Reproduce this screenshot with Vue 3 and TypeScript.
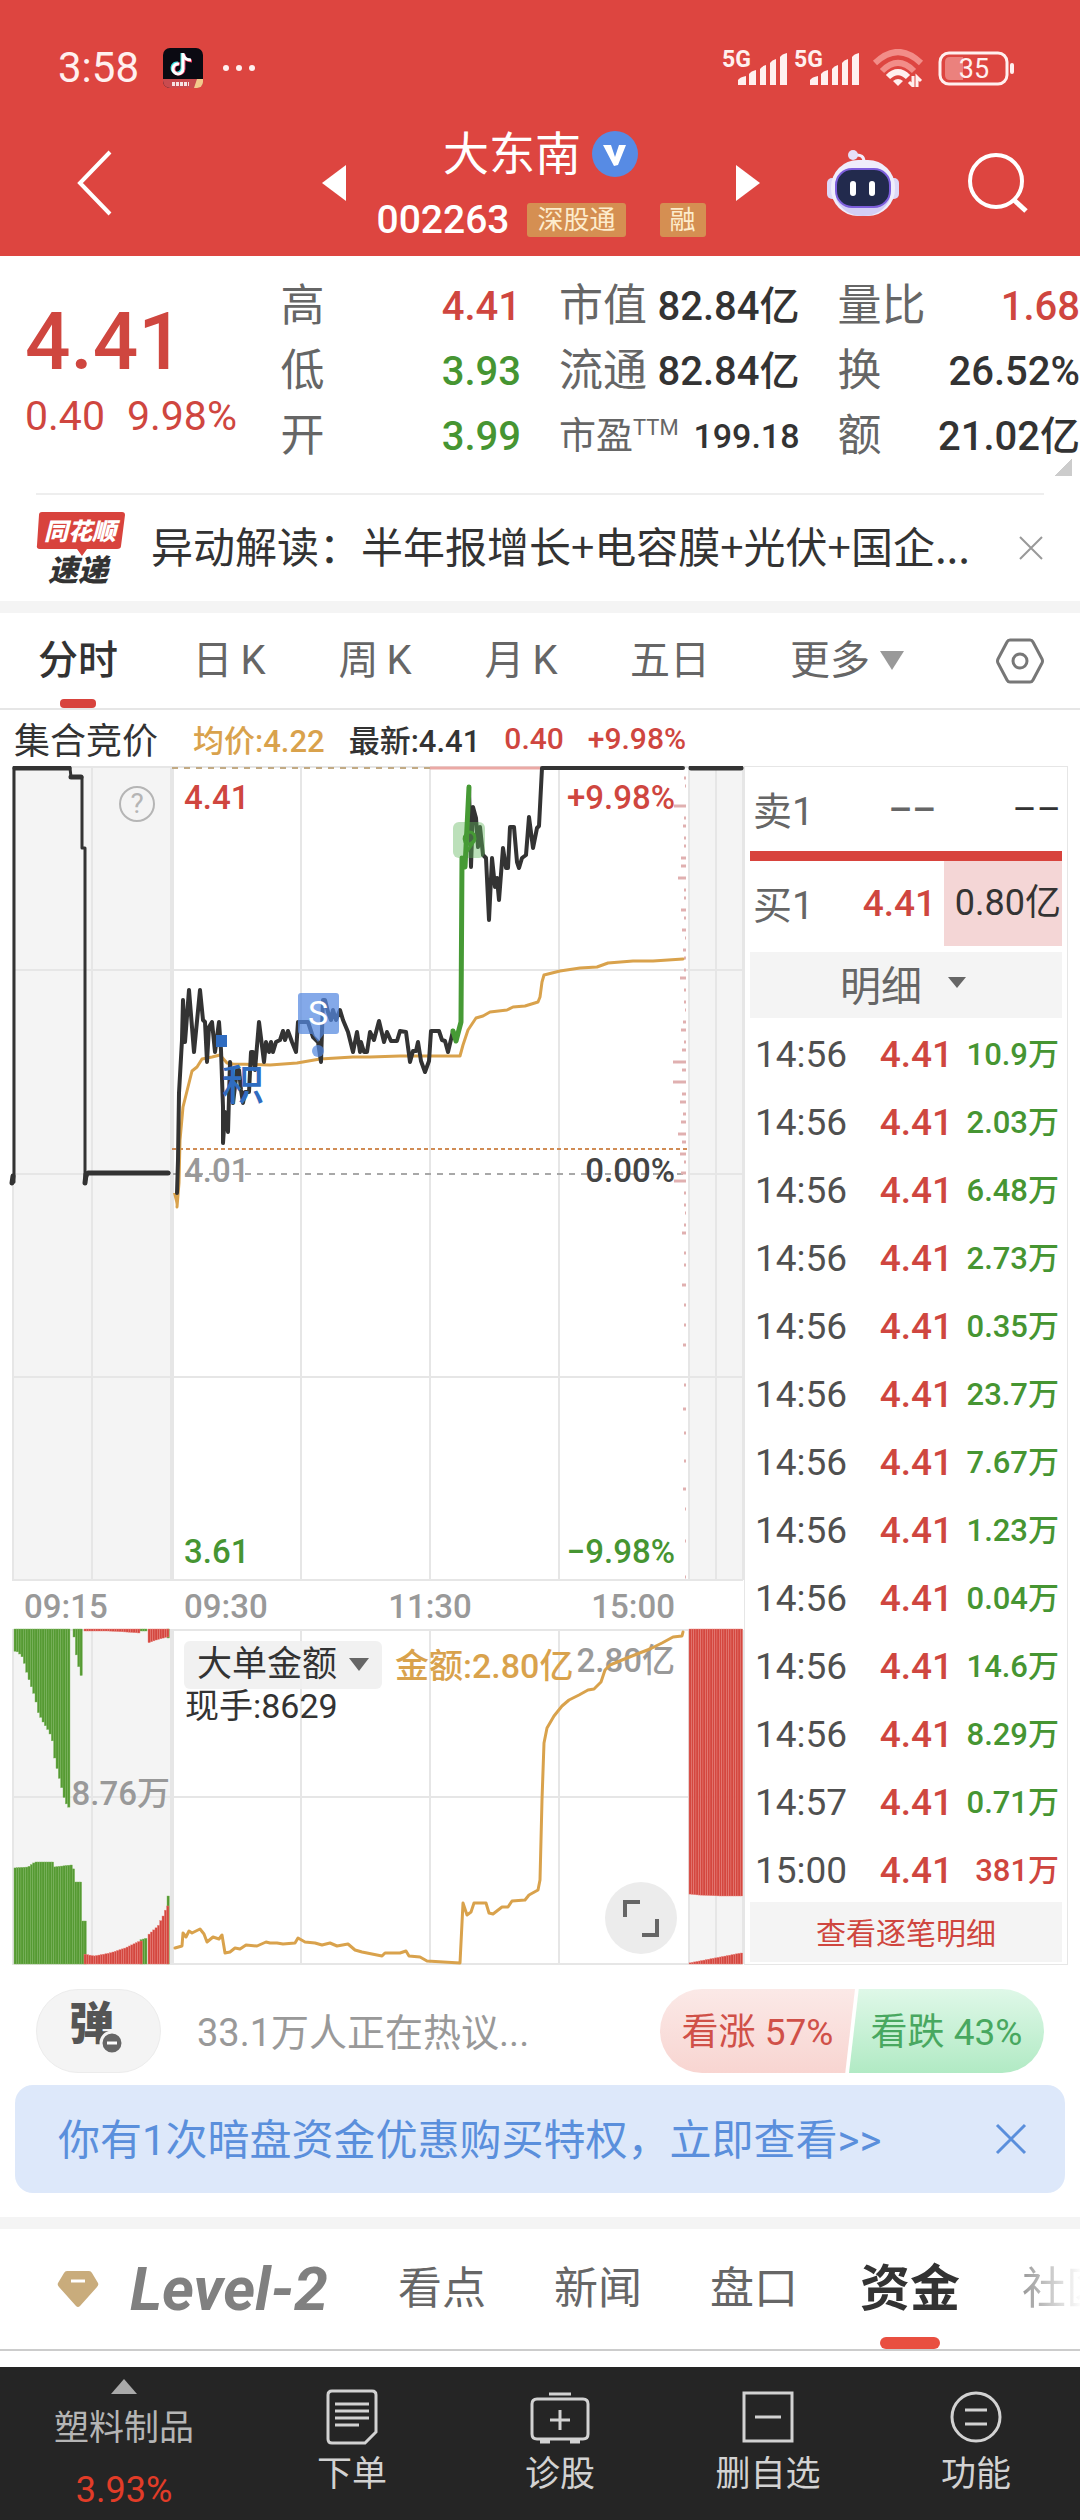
<script setup lang="ts">
import { ref } from 'vue'

type Point = [number, number]
interface Bar { x: number; y: number; h: number }
interface Stat { label: string; sup?: string; value: string; tone: string }

const stats: Stat[][] = [
  [
    { label: '高', value: '4.41', tone: 'up' },
    { label: '低', value: '3.93', tone: 'down' },
    { label: '开', value: '3.99', tone: 'down' },
  ],
  [
    { label: '市值', value: '82.84亿', tone: 'flat' },
    { label: '流通', value: '82.84亿', tone: 'flat' },
    { label: '市盈', sup: 'TTM', value: '199.18', tone: 'flat' },
  ],
  [
    { label: '量比', value: '1.68', tone: 'up' },
    { label: '换', value: '26.52%', tone: 'flat' },
    { label: '额', value: '21.02亿', tone: 'flat' },
  ],
]

const periods = ['日', '周', '月']

const trades = [
  ['14:56', '10.9万'], ['14:56', '2.03万'], ['14:56', '6.48万'], ['14:56', '2.73万'],
  ['14:56', '0.35万'], ['14:56', '23.7万'], ['14:56', '7.67万'], ['14:56', '1.23万'],
  ['14:56', '0.04万'], ['14:56', '14.6万'], ['14:56', '8.29万'], ['14:57', '0.71万'],
  ['15:00', '381万'],
]

const indicator = ref('大单金额')

const priceMorning =
  '177,1193 178,1160 179,1093 182,1040 183,1000 185,1042 189,990 194,1052 200,990 203,1020 205,1022 207,1062 209,1027 212,1022 215,1052 219,1022 221,1050 223,1107 223,1143 225,1112 228,1132 230,1062 233,1103 237,1070 239,1070 241,1090 243,1103 245,1092 249,1092 251,1052 253,1052 255,1070 259,1022 264,1062 266,1042 269,1052 271,1042 273,1052 276,1042 280,1040 283,1031 285,1040 288,1031 292,1042 296,1052 298,1022 308,1022 313,1037 318,1042 321,1062 323,1000 325,1000 328,1012 331,1020 333,1010 336,1020 340,1010 343,1020 348,1032 353,1052 357,1032 360,1052 361,1042 364,1052 367,1052 370,1032 374,1040 379,1021 384,1042 387,1032 391,1041 397,1041 400,1031 406,1032 410,1062 413,1051 416,1051 418,1042 421,1061 425,1072 429,1061 431,1031 439,1031 442,1040 445,1041 448,1052 453,1031'
const priceJump = '453,1031 456,1041 461,1022 462,858 465,867 469,787'
const priceAfternoon =
  '469,787 471,867 473,807 476,818 478,847 480,827 483,855 486,858 489,920 492,858 495,887 497,878 499,900 503,848 506,868 508,868 510,827 514,827 517,862 519,868 522,858 526,855 529,817 533,848 537,828 539,826 542,768 683,768'
const average =
  '177,1207 179,1183 180,1140 183,1107 192,1071 197,1067 202,1059 212,1057 220,1055 227,1063 233,1064 270,1065 297,1063 320,1059 353,1057 370,1057 400,1056 460,1056 463,1045 468,1030 476,1018 483,1016 490,1012 507,1010 513,1007 525,1006 538,1002 540,997 542,982 544,975 560,971 580,968 597,967 608,963 633,961 653,961 683,959'
const amount =
  '175,1948 182,1946 183,1933 186,1937 189,1931 192,1933 200,1929 204,1934 207,1942 213,1937 219,1939 222,1935 225,1953 230,1952 235,1948 240,1949 246,1945 257,1946 266,1942 270,1943 277,1943 283,1944 295,1943 298,1938 305,1942 315,1943 322,1945 330,1943 337,1946 348,1944 355,1950 362,1952 367,1953 382,1956 385,1953 400,1953 406,1951 409,1956 420,1957 427,1961 460,1963 463,1903 467,1915 471,1912 474,1903 486,1903 489,1913 493,1914 502,1907 508,1907 512,1901 525,1900 529,1895 538,1890 540,1880 542,1800 544,1743 547,1728 554,1716 562,1706 569,1700 579,1695 588,1690 594,1689 601,1682 605,1670 610,1665 622,1660 637,1654 650,1649 662,1643 673,1637 682,1636 683,1632'

// Order-flow marks along the right edge: [y, length]
const flowMarks: Point[] = [
  [778, 2], [786, 1], [806, 12], [818, 2], [826, 3], [838, 2], [846, 2], [858, 5], [866, 5], [878, 8],
  [890, 2], [898, 2], [910, 5], [918, 2], [930, 4], [938, 1], [950, 3], [958, 2], [970, 2], [978, 6],
  [990, 2], [1002, 2], [1010, 1], [1022, 3], [1030, 5], [1042, 2], [1050, 4], [1062, 13], [1070, 4],
  [1082, 13], [1094, 4], [1102, 6], [1114, 3], [1122, 5], [1134, 8], [1142, 4], [1154, 6], [1162, 2],
  [1173, 5], [1181, 12], [1193, 2], [1205, 2], [1213, 1], [1225, 2], [1233, 4], [1253, 2], [1265, 2],
  [1285, 4], [1305, 2], [1325, 2], [1345, 3], [1385, 2], [1409, 3], [1433, 2], [1461, 2], [1489, 3],
  [1509, 1], [1541, 1], [1577, 1],
]

function level(edge: Point[], x: number): number {
  for (let i = 1; i < edge.length; i++) {
    const [x0, y0] = edge[i - 1]
    const [x1, y1] = edge[i]
    if (x <= x1) return x1 === x0 ? y1 : y0 + ((y1 - y0) * (x - x0)) / (x1 - x0)
  }
  return edge[edge.length - 1][1]
}

// Columns between a straight base line and a sloping edge
function columns(edge: Point[], base: number): Bar[] {
  const bars: Bar[] = []
  const end = edge[edge.length - 1][0]
  for (let x = edge[0][0]; x < end; x += 7 / 3) {
    const y = level(edge, x + 1)
    bars.push({ x, y: Math.min(y, base), h: Math.abs(y - base) })
  }
  return bars
}

const TOP = 1629
const BASE = 1964
const greenBars = [
  ...columns([[14, 1651], [18, 1652], [23, 1658], [26, 1670], [30, 1683], [35, 1697], [38, 1712], [43, 1722], [48, 1730], [52, 1738], [54, 1755], [58, 1773], [63, 1793], [65, 1802], [70, 1809]], TOP),
  ...columns([[73, 1635], [74, 1637], [77, 1660], [80, 1672], [82, 1679]], TOP),
  ...columns([[14, 1868], [28, 1867], [35, 1862], [53, 1862], [54, 1867], [71, 1865], [74, 1870], [75, 1882], [81, 1882], [82, 1921], [84, 1921]], BASE),
  ...columns([[140, 1940], [147, 1938]], BASE),
  ...columns([[167, 1896], [169, 1896]], BASE),
  ...columns([[140, 1631], [147, 1631]], TOP),
  ...columns([[167, 1638], [169, 1638]], TOP),
]
const redBars = [
  ...columns([[84, 1954], [94, 1956], [110, 1953], [125, 1948], [140, 1941]], BASE),
  ...columns([[148, 1935], [158, 1926], [163, 1916], [167, 1906]], BASE),
  ...columns([[84, 1631], [108, 1631], [126, 1632], [139, 1633]], TOP),
  ...columns([[148, 1643], [156, 1640], [167, 1637]], TOP),
  ...columns([[689, 1894], [698, 1895], [720, 1896], [741, 1896]], TOP),
  ...columns([[689, 1963], [715, 1958], [741, 1953]], BASE),
]
</script>

<template>
  <div class="page">
    <header class="top">
      <div class="status">
        <span class="clock">3:58</span>
        <svg class="app-icon" width="40" height="40" viewBox="0 0 40 40">
          <rect width="40" height="40" rx="7" fill="#0b0a12" />
          <g fill="none" stroke-width="3">
            <path d="M19 5v15a5 5 0 1 1-4-5M19 6c1 4 4 6 8 6" stroke="#38e2e6" />
            <path d="M21 6v15a5 5 0 1 1-4-5M21 7c1 4 4 6 8 6" stroke="#ef3a5e" />
            <path d="M20 5v16a5 5 0 1 1-4-5M20 6c1 4 4 6 8 6" stroke="#fff" />
          </g>
          <path d="M0 31h40v2a7 7 0 0 1-7 7H7a7 7 0 0 1-7-7z" fill="#c94b4f" />
          <path d="M31 40l3-9h6v3a6 6 0 0 1-6 6z" fill="#f3c98b" />
          <path d="M9 36h17" stroke="#fff" stroke-width="4" stroke-dasharray="3 1" opacity=".85" />
        </svg>
        <span class="dots"><i></i><i></i><i></i></span>
        <span class="grow"></span>
        <svg v-for="n in 2" :key="n" class="signal" width="66" height="52" viewBox="0 -8 66 52">
          <text x="0" y="17" font-size="23" font-weight="700" fill="#fff0ef">5G</text>
          <path d="M16 35v-5q2-3 8-4v9zM27 35V24q2-3 7-4v15zM38 35V19q2-3 6-4v20zM48 35V13q2-3 6-4v26zM58 35V7q2-3 7-4v32z" fill="#fff0ef" />
        </svg>
        <svg class="wifi" width="52" height="38" viewBox="0 0 52 38" fill="none" stroke-width="6">
          <path d="M3 14Q26-8 49 14" stroke="#f28d88" />
          <path d="M10 22Q26 6 42 22" stroke="#f28d88" />
          <path d="M16 28Q26 18 36 28" stroke="#fff0ef" />
          <path d="M26 37l-5-5q5-4 10 0z" fill="#fff0ef" />
          <path d="M41 27v10l-4-4M45 38V28l4 4" stroke="#fff0ef" stroke-width="3" />
        </svg>
        <svg class="battery" width="78" height="36" viewBox="0 0 78 36">
          <rect x="2" y="3" width="67" height="31" rx="9" fill="none" stroke="#fff0ef" stroke-width="3" />
          <path d="M12 7h13v23H12q-5 0-5-5V12q0-5 5-5z" fill="#eb817d" />
          <rect x="72" y="13" width="4" height="11" rx="2" fill="#fff0ef" />
          <text x="36" y="28" text-anchor="middle" font-size="27" fill="#fff0ef">35</text>
        </svg>
      </div>
      <nav class="nav">
        <button class="back" aria-label="返回">
          <svg width="46" height="70" viewBox="0 0 46 70"><path d="M38 4L8 35l30 31" fill="none" stroke="#fff" stroke-width="4" /></svg>
        </button>
        <button aria-label="上一只"><svg width="24" height="36" viewBox="0 0 24 36"><path d="M24 0v36L0 18z" fill="#fff" /></svg></button>
        <div class="title">
          <h1>大东南
            <svg width="48" height="48" viewBox="0 0 48 48"><circle cx="24" cy="24" r="23" fill="#578be4" /><path d="M12 15l11 21 4-1 8-20h-7l-4 12-4-12z" fill="#fff" /></svg>
          </h1>
          <p><b>002263</b><span class="tag">深股通</span><span class="tag second">融</span></p>
        </div>
        <button aria-label="下一只"><svg width="24" height="36" viewBox="0 0 24 36"><path d="M0 0v36l24-18z" fill="#fff" /></svg></button>
        <button aria-label="智能助手">
          <svg width="74" height="68" viewBox="0 0 74 68">
            <path d="M38 13q0-8-9-7" fill="none" stroke="#f3ecfb" stroke-width="3" />
            <circle cx="27" cy="6" r="5" fill="#e6dff8" />
            <rect x="1" y="29" width="12" height="21" rx="5" fill="#dcd8f8" />
            <rect x="61" y="29" width="12" height="21" rx="5" fill="#dcd8f8" />
            <rect x="5" y="11" width="64" height="56" rx="27" fill="#efedfb" />
            <path d="M10 50q27 16 54 0-8 17-27 17T10 50z" fill="#d3cdf5" />
            <rect x="10" y="20" width="54" height="38" rx="16" fill="#222a4d" stroke="#7d5edc" stroke-width="2" />
            <rect x="24" y="32" width="6" height="15" rx="3" fill="#fff" />
            <rect x="43" y="32" width="6" height="15" rx="3" fill="#fff" />
          </svg>
        </button>
        <button aria-label="搜索">
          <svg width="62" height="62" viewBox="0 0 62 62" fill="none" stroke="#fff" stroke-width="4"><circle cx="29" cy="29" r="26" /><path d="M47 48l12 11" stroke-width="5" /></svg>
        </button>
      </nav>
    </header>

    <section class="quote">
      <div class="price up">
        <strong>4.41</strong>
        <p><span>0.40</span><span>9.98%</span></p>
      </div>
      <dl v-for="(group, i) in stats" :key="i">
        <div v-for="s in group" :key="s.label" :class="{ compact: s.sup }">
          <dt>{{ s.label }}<sup v-if="s.sup">{{ s.sup }}</sup></dt>
          <dd :class="s.tone">{{ s.value }}</dd>
        </div>
      </dl>
      <i class="corner"></i>
    </section>

    <section class="news">
      <svg width="90" height="92" viewBox="0 -10 90 92">
        <path d="M6 0h80q3 0 3 3l-4 31q0 3-4 3H51l-5 7-5-7H4q-4 0-3-4L3 3q0-3 3-3z" fill="#d8433d" />
        <text x="44" y="28" text-anchor="middle" font-size="24" font-weight="900" font-style="italic" fill="#fff">同花顺</text>
        <text x="42" y="69" text-anchor="middle" font-size="30" font-weight="900" font-style="italic" fill="#333">速递</text>
      </svg>
      <a href="#">异动解读：半年报增长+电容膜+光伏+国企...</a>
      <button aria-label="关闭"><svg width="26" height="26" viewBox="0 0 26 26"><path d="M2 2l22 22M24 2L2 24" stroke="#999" stroke-width="2" /></svg></button>
    </section>

    <nav class="periods">
      <button class="active">分时</button>
      <button v-for="p in periods" :key="p">{{ p }}<span>K</span></button>
      <button>五日</button>
      <button class="more">更多<svg width="24" height="20" viewBox="0 0 24 20"><path d="M0 0h24L12 19z" fill="#999" /></svg></button>
      <button class="settings" aria-label="设置">
        <svg width="48" height="48" viewBox="0 0 48 48" fill="none" stroke="#777" stroke-width="3"><path d="M14 3h20q2 0 3 2l9 17q1 2 0 4l-9 17q-1 2-3 2H14q-2 0-3-2L2 26q-1-2 0-4l9-17q1-2 3-2z" /><circle cx="24" cy="24" r="7" /></svg>
      </button>
    </nav>

    <div class="legend">
      <span class="auction">集合竞价</span>
      <span class="avg">均价:4.22</span>
      <span class="last">最新:4.41</span>
      <span class="up chg">0.40</span>
      <span class="up">+9.98%</span>
    </div>

    <main class="market">
      <div class="charts">
        <svg class="plot" viewBox="0 766 744 1199">
          <g fill="#f4f4f4">
            <rect x="12" y="767" width="161" height="813" />
            <rect x="689" y="767" width="54" height="813" />
            <rect x="12" y="1630" width="161" height="334" />
            <rect x="689" y="1630" width="54" height="334" />
          </g>
          <path d="M12 767H743M12 970H743M12 1174H173M689 1174H743M12 1377H743M12 1580H743M12 1630H743M12 1797H743M12 1964H743M13 767V1580M92 767V1580M301 767V1580M430 767V1580M559 767V1580M689 767V1580M716 767V1580M743 767V1580M13 1630V1964M92 1630V1964M301 1630V1964M430 1630V1964M559 1630V1964M689 1630V1964M716 1630V1964M743 1630V1964" class="grid" />
          <path d="M172 767V1580M172 1630V1964" stroke="#e6e6e6" stroke-width="4" />

          <path d="M172 768H430" stroke="#c2aa84" stroke-width="2" stroke-dasharray="6 6" />
          <path d="M430 768H541" stroke="#eba9a5" stroke-width="3" />
          <path d="M172 1149H689" stroke="#d08c55" stroke-width="2" stroke-dasharray="4 3" />
          <path d="M173 1174H683" stroke="#a8a8a8" stroke-width="2" stroke-dasharray="6 6" />
          <path v-for="[y, w] in flowMarks" :key="y" :d="`M${686 - w} ${y}H686`" stroke="#e0b0b0" stroke-width="3" />

          <g class="value">
            <text x="184" y="1182" fill="#999">4.01</text>
            <text x="675" y="1182" text-anchor="end" fill="#444">0.00%</text>
            <text x="184" y="809" class="t-up">4.41</text>
            <text x="675" y="809" text-anchor="end" class="t-up">+9.98%</text>
            <text x="184" y="1563" class="t-down">3.61</text>
            <text x="675" y="1563" text-anchor="end" class="t-down">−9.98%</text>
          </g>
          <g class="time">
            <text x="24" y="1618">09:15</text>
            <text x="184" y="1618">09:30</text>
            <text x="430" y="1618" text-anchor="middle">11:30</text>
            <text x="675" y="1618" text-anchor="end">15:00</text>
            <text x="170" y="1805" text-anchor="end">8.76万</text>
            <text x="675" y="1672" text-anchor="end">2.80亿</text>
          </g>

          <g fill="none" stroke="#333" stroke-linejoin="round" stroke-linecap="round">
            <path d="M12 1182H14V768H70L71 777H82V848H85V1182L88 1173H169" stroke-width="3" />
            <path d="M15 768H69M71 777H81M88 1173H168M12 1183L13 1176M85 1183L86 1174M691 768H741" stroke-width="5" />
          </g>
          <polyline :points="average" class="gold" />
          <path d="M173 1193h6l-2 16z" fill="#d9a24c" />
          <polyline :points="priceMorning" class="ink" />
          <polyline :points="priceAfternoon" class="ink" />
          <rect x="453" y="822" width="32" height="36" rx="6" fill="#5fb65b" opacity=".42" />
          <polyline :points="priceJump" class="jump" />
          <path d="M469 832q-7 4-4 10 5 5 10-3 0-7-6-7M475 840l-9 13" fill="none" stroke="#469a35" stroke-width="3" />

          <rect x="216" y="1035" width="11" height="12" fill="#2f6cc0" />
          <text x="222" y="1100" font-size="42" font-weight="500" fill="#2f6cc0">积</text>
          <g fill="#5488e0" opacity=".72">
            <path d="M301 993h35q3 0 3 3v35q0 3-3 3H324l-6 8-6-8H301q-3 0-3-3v-35q0-3 3-3z" />
            <circle cx="318" cy="1051" r="6" />
          </g>
          <text x="318" y="1025" text-anchor="middle" font-size="34" fill="#fff">S</text>

          <g fill="#559a33" stroke="#7cb45d" stroke-width="0.4">
            <rect v-for="(b, i) in greenBars" :key="i" :x="b.x" :y="b.y" width="2.3" :height="b.h" />
          </g>
          <g fill="#d4473f" stroke="#e8827b" stroke-width="0.4">
            <rect v-for="(b, i) in redBars" :key="i" :x="b.x" :y="b.y" width="2.3" :height="b.h" />
          </g>
          <polyline :points="amount" class="gold" />

          <text x="185" y="1718" font-size="34" fill="#333">现手:8629</text>
          <text x="395" y="1678" font-size="34" fill="#d9a24c" font-weight="500">金额:2.80亿</text>
        </svg>
        <button class="help" aria-label="帮助">?</button>
        <label class="picker">
          <select v-model="indicator" aria-label="指标"><option>大单金额</option><option>成交量</option></select>
          <svg width="20" height="14" viewBox="0 0 20 14"><path d="M0 0h20L10 13z" fill="#666" /></svg>
        </label>
        <button class="expand" aria-label="全屏">
          <svg width="38" height="38" viewBox="0 0 38 38" fill="none" stroke="#666" stroke-width="4"><path d="M3 18V3h15M20 36h15V20" /></svg>
        </button>
      </div>

      <aside class="book">
        <div class="level"><span>卖1</span><b class="dash">––</b><em class="dash">––</em></div>
        <div class="split"></div>
        <div class="level bid"><span>买1</span><b class="up">4.41</b><em>0.80亿</em></div>
        <button class="detail">明细<svg width="18" height="12" viewBox="0 0 18 12"><path d="M0 0h18L9 11z" fill="#666" /></svg></button>
        <table>
          <tbody>
            <tr v-for="(t, i) in trades" :key="i">
              <td>{{ t[0] }}</td>
              <td class="up">4.41</td>
              <td :class="i === trades.length - 1 ? 'up' : 'down'">{{ t[1] }}</td>
            </tr>
          </tbody>
        </table>
        <button class="all">查看逐笔明细</button>
      </aside>
    </main>

    <section class="talk">
      <button class="danmu" aria-label="弹幕">弹
        <svg width="26" height="26" viewBox="0 0 26 26"><circle cx="13" cy="13" r="11" fill="#666" stroke="#f4f4f4" stroke-width="3" /><path d="M8 13h10" stroke="#fff" stroke-width="3" /></svg>
      </button>
      <a href="#">33.1万人正在热议...</a>
      <div class="vote">
        <button class="bull">看涨 57%</button>
        <button class="bear">看跌 43%</button>
      </div>
    </section>

    <section class="promo">
      <a href="#">你有1次暗盘资金优惠购买特权，立即查看&gt;&gt;</a>
      <button aria-label="关闭"><svg width="32" height="32" viewBox="0 0 32 32"><path d="M2 2l28 28M30 2L2 30" stroke="#5a8fdc" stroke-width="3" /></svg></button>
    </section>

    <nav class="tabs">
      <svg width="42" height="38" viewBox="0 0 42 38"><path d="M10 1h22q2 0 3 2l6 10q1 2-1 4L23 36q-2 2-4 0L2 17q-2-2-1-4L7 3q1-2 3-2z" fill="#c9ac7c" /><path d="M14 11h14" stroke="#fff" stroke-width="3" /></svg>
      <button class="level2">Level-2</button>
      <button>看点</button>
      <button>新闻</button>
      <button>盘口</button>
      <button class="active">资金</button>
      <button class="cut">社区</button>
    </nav>

    <footer class="dock">
      <button class="sector">
        <svg width="26" height="15" viewBox="0 0 26 15"><path d="M0 15h26L13 0z" fill="#aaa" /></svg>
        <span>塑料制品</span>
        <em>3.93%</em>
      </button>
      <button>
        <svg width="60" height="56" viewBox="0 0 60 56"><path d="M10 2h40q4 0 4 4v37L43 54H10q-4 0-4-4V6q0-4 4-4zM13 15h34M13 22h34M13 29h34M13 36h24" /></svg>
        <span>下单</span>
      </button>
      <button>
        <svg width="60" height="56" viewBox="0 0 60 56"><path d="M19 5h22M7 10h46q5 0 5 5v30q0 5-5 5H7q-5 0-5-5V15q0-5 5-5zM30 21v20M20 31h20M10 53h10M40 53h10" /></svg>
        <span>诊股</span>
      </button>
      <button>
        <svg width="60" height="56" viewBox="0 0 60 56"><path d="M6 4h48v48H6zM17 28h26" /></svg>
        <span>删自选</span>
      </button>
      <button>
        <svg width="60" height="56" viewBox="0 0 60 56"><path d="M19 21h22M19 35h22" /><circle cx="30" cy="28" r="24" /></svg>
        <span>功能</span>
      </button>
    </footer>
  </div>
</template>

<style>
body { margin: 0; background: #fff; }
</style>

<style scoped>
* { box-sizing: border-box; }
.page { font-family: Roboto, "Noto Sans CJK SC", sans-serif; color: #333; background: #fff; overflow: hidden; white-space: nowrap; }
button { font: inherit; color: inherit; background: none; border: 0; padding: 0; margin: 0; }
a { color: inherit; text-decoration: none; }
h1, p, dl, dd { margin: 0; }
svg { display: block; flex: none; }
em { font-style: normal; }
.grow { flex: 1; }
.up { color: #cf463f; }
.down { color: #469532; }
.flat { color: #333; }

.top { background: #dd4540; color: #fff; height: 256px; }
.status { display: flex; align-items: center; height: 100px; padding: 36px 64px 0 58px; }
.clock { font-size: 42px; line-height: 48px; color: #fff0ef; margin-right: 24px; }
.dots { display: flex; gap: 7px; margin-left: 20px; }
.dots i { width: 6px; height: 6px; border-radius: 3px; background: #fff0ef; }
.signal { margin-right: 6px; }
.wifi { margin-left: 6px; }
.battery { margin-left: 14px; }
.nav { display: grid; grid-template-columns: 310fr 48fr 366fr 48fr 182fr 88fr; align-items: center; height: 156px; padding: 10px 38px 0 0; }
.nav button { display: flex; justify-content: center; }
.nav .back { justify-content: flex-start; padding-left: 72px; }
.title h1 { display: flex; justify-content: center; align-items: center; gap: 10px; font-size: 46px; font-weight: 400; line-height: 52px; }
.title p { display: flex; justify-content: center; align-items: center; margin-top: 22px; line-height: 36px; }
.title b { font-size: 39px; font-weight: 500; }
.tag { background: #d58f52; color: #fdeccd; font-size: 26px; line-height: 34px; padding: 0 10px; border-radius: 3px; margin-left: 18px; }
.tag.second { margin-left: 34px; }

.quote { position: relative; display: grid; grid-template-columns: 217fr 240fr 240fr 242fr; gap: 38px; padding: 18px 0 24px 25px; }
.price strong { display: block; font-size: 80px; font-weight: 500; line-height: 80px; margin-top: 28px; }
.price p { display: flex; gap: 22px; font-size: 41px; line-height: 48px; margin-top: 10px; }
.quote dl > div { display: flex; justify-content: space-between; align-items: center; height: 65px; }
.quote dt { font-size: 44px; line-height: 65px; color: #666; display: flex; }
.quote dd { font-size: 40px; font-weight: 500; line-height: 65px; }
.quote .compact dt { font-size: 37px; }
.quote .compact dd { font-size: 34px; }
.quote sup { font-size: 22px; line-height: 48px; }
.corner { position: absolute; right: 8px; bottom: 17px; width: 18px; height: 18px; background: linear-gradient(135deg, transparent 50%, #ccc 50%); }

.news { display: flex; align-items: center; margin: 0 36px; height: 108px; border-top: 2px solid #eee; }
.news a { flex: 1; margin-left: 25px; padding-bottom: 6px; font-family: "Noto Sans CJK SC", sans-serif; font-size: 42px; line-height: 60px; }

.periods { display: grid; grid-template-columns: 156fr 146fr 146fr 146fr 152fr 202fr 132fr; align-items: center; border-top: 12px solid #f4f4f4; border-bottom: 2px solid #e6e6e6; height: 109px; color: #666; font-size: 40px; }
.periods button { position: relative; line-height: 95px; }
.periods button span { margin-left: 8px; }
.periods .active { color: #333; font-weight: 500; }
.periods .active::after { content: ""; position: absolute; left: 50%; bottom: 0; width: 36px; height: 9px; margin-left: -18px; border-radius: 4px; background: #d8433d; }
.periods .more, .periods .settings { display: flex; align-items: center; justify-content: center; gap: 10px; }
.periods .settings { padding-left: 12px; }

.legend { display: flex; align-items: center; height: 56px; padding-left: 14px; font-size: 31px; font-weight: 500; }
.legend .auction { font-size: 36px; font-weight: 400; margin-right: 35px; }
.legend .avg { color: #d9a24c; margin-right: 24px; }
.legend .last { margin-right: 24px; }
.legend .chg { margin-right: 24px; }
.legend .up { font-size: 30px; }

.market { display: grid; grid-template-columns: 744fr 324fr; padding-right: 12px; align-items: start; }
.charts { position: relative; }
.plot { width: 100%; height: auto; }
.grid { stroke: #e6e6e6; stroke-width: 2; fill: none; }
.value { font-size: 33px; font-weight: 500; }
.time { font-size: 33px; font-weight: 500; fill: #999; }
.t-up { fill: #cf463f; }
.t-down { fill: #469532; }
.ink, .gold, .jump { fill: none; stroke-linejoin: round; stroke-linecap: round; stroke-width: 4; }
.ink { stroke: #333; }
.gold { stroke: #d9a24c; stroke-width: 3; }
.jump { stroke: #469a35; stroke-width: 5; }
.help { position: absolute; left: 119px; top: 20px; width: 36px; height: 36px; border: 2px solid #b5b5b5; border-radius: 18px; color: #b5b5b5; font-size: 28px; line-height: 32px; }
.picker { position: absolute; left: 184px; top: 875px; display: flex; align-items: center; height: 48px; padding: 0 13px; border-radius: 6px; background: rgba(240, 240, 240, .9); }
.picker select { appearance: none; width: 152px; height: 48px; padding: 0; border: 0; background: none; color: #333; font: inherit; font-size: 35px; line-height: 48px; }
.expand { position: absolute; left: 605px; top: 1116px; display: flex; align-items: center; justify-content: center; width: 72px; height: 72px; border-radius: 36px; background: #ececec; }

.book { display: flex; flex-direction: column; height: 100%; padding: 0 5px; border: 1px solid #e6e6e6; }
.level { display: grid; grid-template-columns: 90fr 104fr 118fr; align-items: center; height: 84px; }
.level span { font-size: 39px; color: #666; padding: 0 0 3px 3px; }
.level b { font-size: 37px; font-weight: 500; text-align: right; padding-right: 8px; }
.level em { font-size: 36px; text-align: right; padding-right: 1px; }
.level b.dash { color: #666; }
.level .dash { font-size: 37px; }
.split { height: 10px; background: #d8433d; }
.bid em { background: #f4d6d6; line-height: 85px; }
.detail { display: flex; align-items: center; justify-content: center; gap: 26px; height: 66px; margin-top: 7px; padding: 0 6px 4px 0; background: #f4f4f4; color: #666; font-size: 41px; }
table { width: 100%; border-collapse: collapse; }
tr { height: 68px; }
td { padding: 6px 0 0; font-size: 37px; line-height: 44px; color: #505050; }
td:first-child { padding-left: 5px; }
td:nth-child(2) { text-align: right; font-weight: 500; color: #cf463f; }
td:last-child { width: 109px; text-align: right; font-size: 31px; font-weight: 500; padding-right: 3px; }
td.down { color: #469532; }
td.up { color: #cf463f; }
.all { height: 60px; margin-bottom: 1px; padding-bottom: 3px; background: #f4f4f4; color: #cf463f; font-size: 30px; }

.talk { display: flex; align-items: center; padding: 0 36px; margin-top: 24px; height: 84px; }
.danmu { position: relative; width: 125px; height: 84px; padding: 0 14px 12px 0; border-radius: 42px; background: #f4f4f4; border: 1px solid #ececec; color: #555; font-size: 45px; line-height: 60px; font-weight: 900; }
.danmu svg { position: absolute; left: 62px; top: 40px; }
.talk a { flex: 1; margin-left: 36px; padding-bottom: 4px; font-size: 38px; color: #999; }
.vote { display: flex; }
.vote button { width: 195px; height: 84px; padding-bottom: 4px; font-size: 37px; }
.bull { color: #d05048; background: linear-gradient(#fbe9e7, #f8d5d1); border-radius: 42px 0 0 42px; clip-path: polygon(0 0, 100% 0, 95% 100%, 0 100%); }
.vote .bear { color: #48a860; background: linear-gradient(#dff8e8, #b1eac4); border-radius: 0 42px 42px 0; clip-path: polygon(5% 0, 100% 0, 100% 100%, 0 100%); margin-left: -6px; }

.promo { display: flex; align-items: center; justify-content: space-between; margin: 12px 15px 24px; padding: 0 38px 0 43px; height: 108px; border-radius: 18px; background: #dde8fa; color: #5a8fdc; font-size: 42px; }
.promo a { padding-bottom: 5px; }

.tabs { display: flex; align-items: center; height: 134px; padding-left: 57px; border-top: 12px solid #f4f4f4; border-bottom: 2px solid #ccc; color: #666; font-size: 44px; overflow: hidden; }
.tabs button { position: relative; line-height: 120px; margin-right: 68px; }
.tabs .level2 { font-size: 61px; font-weight: 700; font-style: italic; color: #808080; margin: 0 70px 0 31px; }
.tabs .active { font-size: 50px; font-weight: 700; color: #333; margin-right: 62px; margin-left: -6px; }
.tabs .active::after { content: ""; position: absolute; left: 50%; bottom: 0; width: 60px; height: 12px; margin-left: -30px; border-radius: 6px; background: #e94f40; }
.tabs .cut { color: transparent; background: linear-gradient(90deg, #999, #fff 60px); background-clip: text; }

.dock { display: grid; grid-template-columns: 248fr 208fr 208fr 208fr 208fr; height: 153px; margin-top: 16px; background: #252525; color: #d2d2d2; font-size: 35px; }
.dock button { display: flex; flex-direction: column; align-items: center; padding-top: 22px; }
.dock button > svg { fill: none; stroke: #d2d2d2; stroke-width: 3; }
.dock span { line-height: 52px; margin-top: 4px; }
.dock .sector { padding-top: 12px; color: #b5b5b5; }
.dock .sector > svg { stroke: none; }
.dock .sector span { margin-top: 9px; }
.dock .sector em { font-size: 36px; line-height: 52px; margin-top: 9px; color: #e23c28; }
</style>
